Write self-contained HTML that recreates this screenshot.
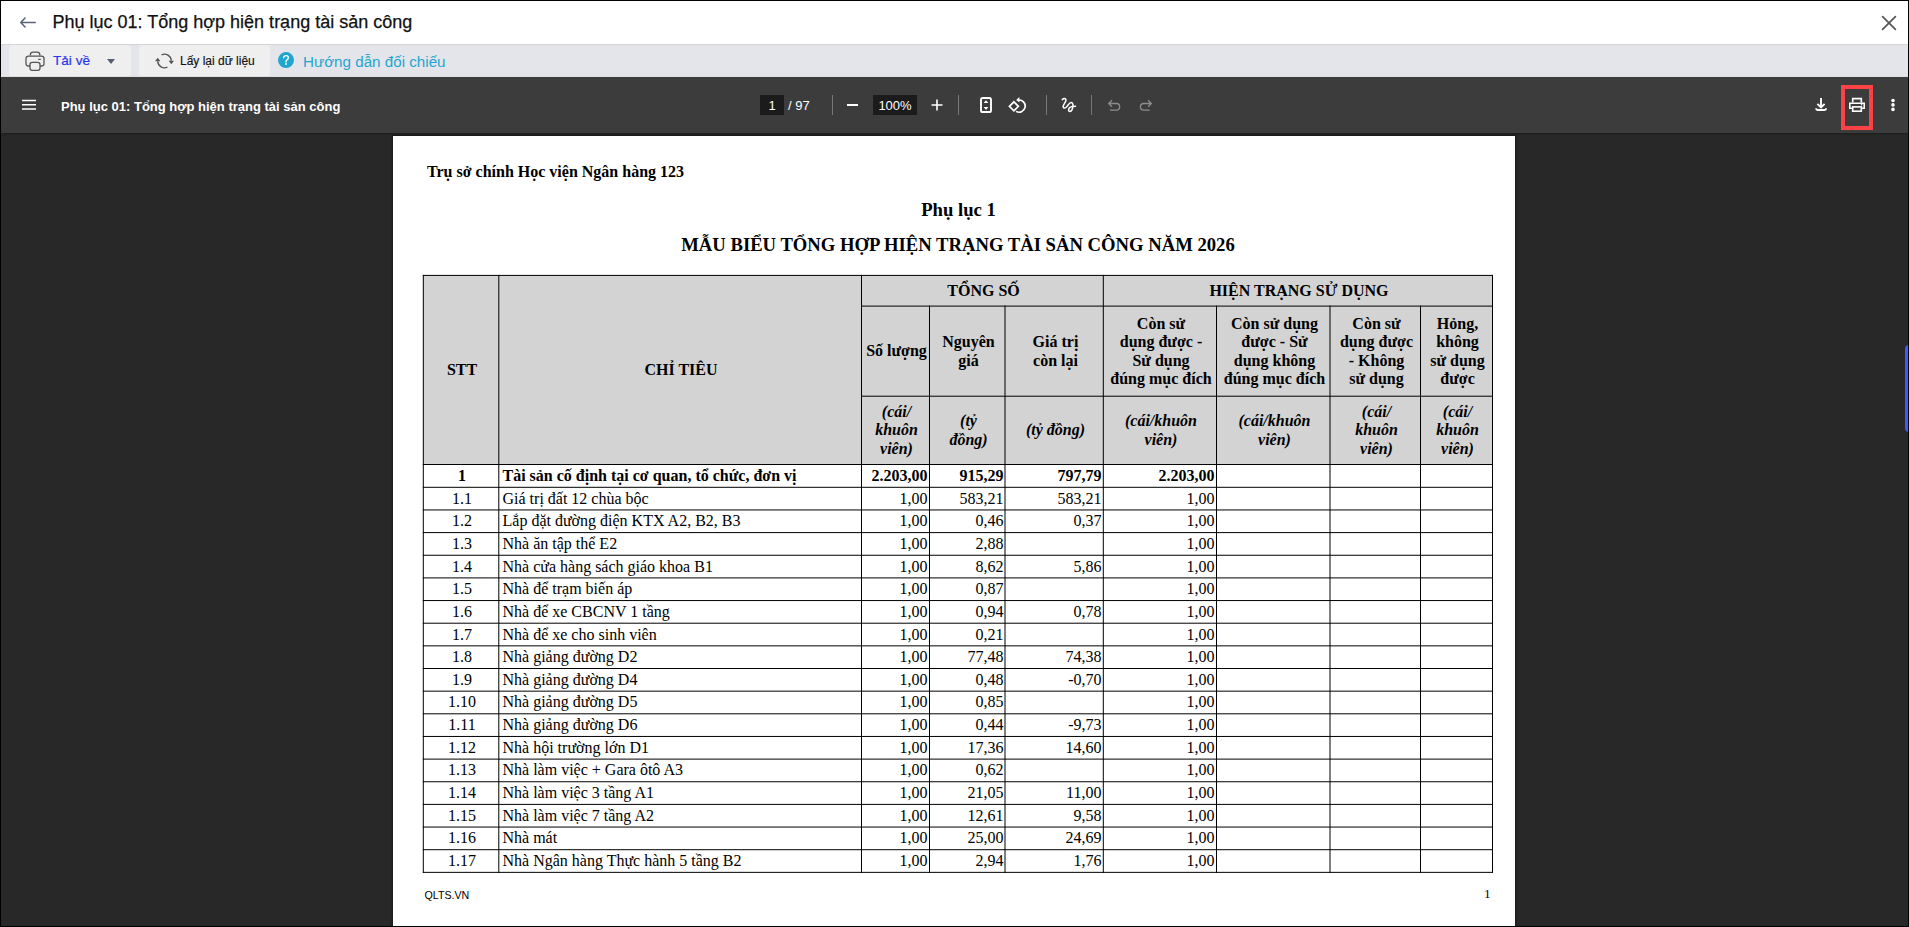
<!DOCTYPE html>
<html><head><meta charset="utf-8"><title>Phụ lục 01</title>
<style>
*{margin:0;padding:0;box-sizing:border-box}
html,body{width:1909px;height:927px;overflow:hidden;background:#000}
body{position:relative;font-family:"Liberation Sans",sans-serif}
.a{position:absolute}
.serif{font-family:"Liberation Serif",serif;color:#000}
.ln{position:absolute;background:#000}
.cell{position:absolute;display:flex;align-items:center;justify-content:center;text-align:center;font-family:"Liberation Serif",serif;font-size:16px;line-height:18.4px;color:#000;white-space:nowrap}
.hd{font-weight:bold}
.it{font-style:italic;font-weight:bold}
.r{justify-content:flex-end;text-align:right;padding-right:1.5px}
.l{justify-content:flex-start;text-align:left;padding-left:3.5px}
.c1{padding-left:2px}
</style></head><body>

<div class="a" style="left:0;top:0;width:1909px;height:927px;background:#282828"></div>
<div class="a" style="left:0;top:0;width:1909px;height:45px;background:#fff;border-bottom:1px solid #d4d4d4"></div>
<svg class="a" style="left:18px;top:15px" width="20" height="15" viewBox="0 0 20 15"><path d="M7 3 L2.8 7.5 L7 12 M2.8 7.5 H17.2" fill="none" stroke="#5b6578" stroke-width="1.6" stroke-linecap="round" stroke-linejoin="round"/></svg>
<div class="a" style="left:52.5px;top:11px;font-size:18px;line-height:22px;color:#111;-webkit-text-stroke:0.25px #111">Phụ lục 01: Tổng hợp hiện trạng tài sản công</div>
<svg class="a" style="left:1880px;top:14px" width="18" height="18" viewBox="0 0 18 18"><path d="M2.6 2.6 L15.4 15.4 M15.4 2.6 L2.6 15.4" stroke="#555" stroke-width="1.7" stroke-linecap="round"/></svg>
<div class="a" style="left:0;top:45px;width:1909px;height:32px;background:#e4e5ea"></div>
<div class="a" style="left:9px;top:45px;width:122px;height:31px;background:#efefef;border-radius:3px"></div>
<div class="a" style="left:139px;top:45px;width:131px;height:31px;background:#efefef;border-radius:3px"></div>
<svg class="a" style="left:24px;top:50px" width="22" height="22" viewBox="0 0 22 22"><g fill="none" stroke="#555" stroke-width="1.3"><path d="M6.4 5.6 V4.5 Q6.4 2.2 9 2.2 H13 Q15.8 2.2 15.8 4.5 V5.6"/><path d="M6 16 H4.3 Q2 16 2 13.5 V8.6 Q2 6.1 4.6 6.1 H17.4 Q20 6.1 20 8.6 V13.5 Q20 16 17.7 16 H16"/><rect x="6" y="12.4" width="10" height="7.9" rx="2.2"/></g><path d="M14.2 9.4 H16.8" stroke="#555" stroke-width="1.2"/></svg>
<div class="a" style="left:53px;top:53px;font-size:13.6px;line-height:16px;color:#2b35f0;-webkit-text-stroke:0.2px #2b35f0">Tải về</div>
<div class="a" style="left:107px;top:59px;width:0;height:0;border-left:4px solid transparent;border-right:4px solid transparent;border-top:5px solid #555e70"></div>
<svg class="a" style="left:153px;top:52px" width="22" height="18" viewBox="0 0 22 18"><g fill="none" stroke="#555" stroke-width="1.4" stroke-linecap="butt"><path d="M8.63 2.84 A6.8 6.8 0 0 1 18.27 8.6"/><path d="M14.37 15.16 A6.8 6.8 0 0 1 4.73 9.4"/></g><path d="M15.6 8.7 L21 8.7 L18.3 12.3 Z" fill="#555"/><path d="M2 9.3 L7.4 9.3 L4.7 5.7 Z" fill="#555"/></svg>
<div class="a" style="left:180px;top:54px;font-size:12px;line-height:15px;color:#111;-webkit-text-stroke:0.15px #111">Lấy lại dữ liệu</div>
<svg class="a" style="left:277px;top:51px" width="18" height="18" viewBox="0 0 18 18"><circle cx="9" cy="9.1" r="8" fill="#1fa6cf"/><path d="M6.6 6.8 Q6.6 4.6 9 4.6 Q11.4 4.6 11.4 6.8 Q11.4 8 10 8.9 Q9 9.6 9 11" fill="none" stroke="#fff" stroke-width="1.3" stroke-linecap="round"/><rect x="8.2" y="12.2" width="1.6" height="1.6" fill="#fff"/></svg>
<div class="a" style="left:303px;top:52px;font-size:15.2px;line-height:19px;color:#1fa6cf">Hướng dẫn đối chiếu</div>
<div class="a" style="left:0;top:77px;width:1909px;height:56px;background:#3c3c3c;box-shadow:0 1px 2px rgba(0,0,0,.3)"></div>
<svg class="a" style="left:22px;top:99px" width="16" height="12" viewBox="0 0 16 12"><path d="M0 1.5 H14 M0 5.7 H14 M0 9.9 H14" stroke="#fff" stroke-width="1.5"/></svg>
<div class="a" style="left:61px;top:98px;font-size:13px;line-height:18px;color:#fff;font-weight:bold">Phụ lục 01: Tổng hợp hiện trạng tài sản công</div>
<div class="a" style="left:760px;top:95px;width:24px;height:20px;background:#1b1b1b"></div>
<div class="a" style="left:760px;top:98px;width:24px;text-align:center;font-size:13px;line-height:16px;color:#fff">1</div>
<div class="a" style="left:788px;top:98px;font-size:13px;line-height:16px;color:#fff">/ 97</div>
<div class="a" style="left:832px;top:95px;width:1px;height:20px;background:#777"></div>
<div class="a" style="left:847px;top:104px;width:11px;height:1.6px;background:#fff"></div>
<div class="a" style="left:873px;top:95px;width:44px;height:20px;background:#1b1b1b"></div>
<div class="a" style="left:873px;top:98px;width:44px;text-align:center;font-size:13px;line-height:16px;color:#fff">100%</div>
<svg class="a" style="left:931px;top:99px" width="12" height="12" viewBox="0 0 12 12"><path d="M6 0.5 V11.5 M0.5 6 H11.5" stroke="#fff" stroke-width="1.6"/></svg>
<div class="a" style="left:958px;top:95px;width:1px;height:20px;background:#777"></div>
<svg class="a" style="left:979px;top:96px" width="14" height="18" viewBox="0 0 14 18"><rect x="2" y="2" width="10" height="14" rx="1.6" fill="none" stroke="#fff" stroke-width="1.9"/><path d="M4.6 7.1 L7 4.2 L9.4 7.1 Z M4.6 11 L7 14 L9.4 11 Z" fill="#fff"/></svg>
<svg class="a" style="left:1007px;top:95px" width="20" height="19" viewBox="0 0 20 19"><g fill="none" stroke="#fff" stroke-width="1.7" stroke-linejoin="miter"><path d="M2.4 11.3 L6.9 6.8 L11.4 11.3 L6.9 15.8 Z"/><path d="M11.57 5.02 A6.1 6.1 0 1 1 9.05 16.38"/></g><path d="M9.2 4.9 L12.4 2 L12.4 7.6 Z" fill="#fff"/></svg>
<div class="a" style="left:1046px;top:95px;width:1px;height:20px;background:#777"></div>
<svg class="a" style="left:1056px;top:94px" width="26" height="22" viewBox="0 0 26 22"><path d="M6.3 5.6 C7.5 4.5 9.5 4 10 5.8 C10.3 7.5 7.3 10.5 7.1 12.3 C7 14 8.5 14.6 10 13.5 C11.5 12.3 13 8.8 15 8.6 C17 8.5 17.2 11 16.8 13 C16.4 15.3 15 17.5 13.7 17.5 C12.3 17.5 12.3 15.5 13.3 14 C14.5 12.4 17.5 12.3 19.5 12.3" fill="none" stroke="#fff" stroke-width="1.5" stroke-linecap="round" stroke-linejoin="round"/></svg>
<div class="a" style="left:1091px;top:95px;width:1px;height:20px;background:#777"></div>
<svg class="a" style="left:1100px;top:92px" width="26" height="26" viewBox="1100 92 26 26"><path d="M1112 100.2 L1108.7 103.5 L1112 106.8 M1108.7 103.5 H1116.4 A3.3 3.3 0 0 1 1116.4 110.1 H1110" fill="none" stroke="#8c8c8c" stroke-width="1.3"/></svg>
<svg class="a" style="left:1134px;top:92px" width="26" height="26" viewBox="1134 92 26 26"><path d="M1148.1 100.2 L1151.4 103.5 L1148.1 106.8 M1151.4 103.5 H1143.7 A3.3 3.3 0 0 0 1143.7 110.1 H1149.7" fill="none" stroke="#8c8c8c" stroke-width="1.3"/></svg>
<svg class="a" style="left:1810px;top:92px" width="22" height="22" viewBox="1810 92 22 22"><g fill="none" stroke="#fff" stroke-width="1.9"><path d="M1821 98 V107.5"/><path d="M1817.4 103.8 L1821 107.4 L1824.6 103.8"/><path d="M1816.2 108.2 V108.8 Q1816.2 110 1817.6 110 H1824.6 Q1826 110 1826 108.8 V108.2"/></g></svg>
<div class="a" style="left:1841px;top:85px;width:32px;height:45px;border:4px solid #fc4245"></div>
<svg class="a" style="left:1845px;top:94px" width="24" height="22" viewBox="1845 94 24 22"><g fill="none" stroke="#fff" stroke-width="1.6"><path d="M1852.7 102.5 V98.6 H1861.3 V102.5"/><path d="M1852.4 108.3 H1849.8 V103.3 H1864.2 V108.3 H1861.6"/><rect x="1852.7" y="106.9" width="8.6" height="4.3"/></g><circle cx="1861.6" cy="104.8" r="0.8" fill="#fff"/></svg>
<svg class="a" style="left:1888px;top:96px" width="10" height="18" viewBox="1888 96 10 18"><circle cx="1893" cy="100.5" r="1.8" fill="#fff"/><circle cx="1893" cy="104.9" r="1.8" fill="#fff"/><circle cx="1893" cy="109.4" r="1.8" fill="#fff"/></svg>
<div class="a" style="left:1905px;top:345px;width:4px;height:87px;background:#3d5afe;border-radius:4px 0 0 4px"></div>
<div class="a" style="left:393px;top:136px;width:1122px;height:791px;background:#fff;box-shadow:0 0 2px 1px rgba(0,0,0,.4)"></div>
<div class="a serif" style="left:427px;top:161.7px;font-size:16px;line-height:20px;font-weight:bold">Trụ sở chính Học viện Ngân hàng 123</div>
<div class="a serif" style="left:424px;width:1069px;top:198.5px;text-align:center;font-size:18.67px;line-height:22px;font-weight:bold">Phụ lục 1</div>
<div class="a serif" style="left:423.5px;width:1069px;top:234.4px;text-align:center;font-size:18.67px;line-height:22px;font-weight:bold">MẪU BIỂU TỔNG HỢP HIỆN TRẠNG TÀI SẢN CÔNG NĂM 2026</div>
<div class="a" style="left:423px;top:275px;width:1069px;height:189px;background:#d3d3d3"></div>
<div class="cell hd c1" style="left:424px;top:276px;width:74px;height:188px">STT</div>
<div class="cell hd c1" style="left:499px;top:276px;width:362px;height:188px">CHỈ TIÊU</div>
<div class="cell hd c1" style="left:862px;top:276px;width:241px;height:30px">TỔNG SỐ</div>
<div class="cell hd c1" style="left:1104px;top:276px;width:388px;height:30px">HIỆN TRẠNG SỬ DỤNG</div>
<div class="cell hd c1" style="left:862px;top:307px;width:67px;height:89px">Số lượng</div>
<div class="cell it c1" style="left:862px;top:397px;width:67px;height:67px">(cái/<br>khuôn<br>viên)</div>
<div class="cell hd c1" style="left:930px;top:307px;width:75px;height:89px">Nguyên<br>giá</div>
<div class="cell it c1" style="left:930px;top:397px;width:75px;height:67px">(tỷ<br>đồng)</div>
<div class="cell hd c1" style="left:1006px;top:307px;width:97px;height:89px">Giá trị<br>còn lại</div>
<div class="cell it c1" style="left:1006px;top:397px;width:97px;height:67px">(tỷ đồng)</div>
<div class="cell hd c1" style="left:1104px;top:307px;width:112px;height:89px">Còn sử<br>dụng được -<br>Sử dụng<br>đúng mục đích</div>
<div class="cell it c1" style="left:1104px;top:397px;width:112px;height:67px">(cái/khuôn<br>viên)</div>
<div class="cell hd c1" style="left:1217px;top:307px;width:113px;height:89px">Còn sử dụng<br>được - Sử<br>dụng không<br>đúng mục đích</div>
<div class="cell it c1" style="left:1217px;top:397px;width:113px;height:67px">(cái/khuôn<br>viên)</div>
<div class="cell hd c1" style="left:1331px;top:307px;width:89px;height:89px">Còn sử<br>dụng được<br>- Không<br>sử dụng</div>
<div class="cell it c1" style="left:1331px;top:397px;width:89px;height:67px">(cái/<br>khuôn<br>viên)</div>
<div class="cell hd c1" style="left:1421px;top:307px;width:71px;height:89px">Hỏng,<br>không<br>sử dụng<br>được</div>
<div class="cell it c1" style="left:1421px;top:397px;width:71px;height:67px">(cái/<br>khuôn<br>viên)</div>
<div class="cell  hd c1" style="left:424px;top:465px;width:74px;height:22px">1</div>
<div class="cell l hd" style="left:499px;top:465px;width:362px;height:22px">Tài sản cố định tại cơ quan, tổ chức, đơn vị</div>
<div class="cell r hd" style="left:862px;top:465px;width:67px;height:22px">2.203,00</div>
<div class="cell r hd" style="left:930px;top:465px;width:75px;height:22px">915,29</div>
<div class="cell r hd" style="left:1006px;top:465px;width:97px;height:22px">797,79</div>
<div class="cell r hd" style="left:1104px;top:465px;width:112px;height:22px">2.203,00</div>
<div class="cell  c1" style="left:424px;top:488px;width:74px;height:22px">1.1</div>
<div class="cell l" style="left:499px;top:488px;width:362px;height:22px">Giá trị đất 12 chùa bộc</div>
<div class="cell r" style="left:862px;top:488px;width:67px;height:22px">1,00</div>
<div class="cell r" style="left:930px;top:488px;width:75px;height:22px">583,21</div>
<div class="cell r" style="left:1006px;top:488px;width:97px;height:22px">583,21</div>
<div class="cell r" style="left:1104px;top:488px;width:112px;height:22px">1,00</div>
<div class="cell  c1" style="left:424px;top:511px;width:74px;height:21px">1.2</div>
<div class="cell l" style="left:499px;top:511px;width:362px;height:21px">Lắp đặt đường điện KTX A2, B2, B3</div>
<div class="cell r" style="left:862px;top:511px;width:67px;height:21px">1,00</div>
<div class="cell r" style="left:930px;top:511px;width:75px;height:21px">0,46</div>
<div class="cell r" style="left:1006px;top:511px;width:97px;height:21px">0,37</div>
<div class="cell r" style="left:1104px;top:511px;width:112px;height:21px">1,00</div>
<div class="cell  c1" style="left:424px;top:533px;width:74px;height:22px">1.3</div>
<div class="cell l" style="left:499px;top:533px;width:362px;height:22px">Nhà ăn tập thể E2</div>
<div class="cell r" style="left:862px;top:533px;width:67px;height:22px">1,00</div>
<div class="cell r" style="left:930px;top:533px;width:75px;height:22px">2,88</div>
<div class="cell r" style="left:1104px;top:533px;width:112px;height:22px">1,00</div>
<div class="cell  c1" style="left:424px;top:556px;width:74px;height:22px">1.4</div>
<div class="cell l" style="left:499px;top:556px;width:362px;height:22px">Nhà cửa hàng sách giáo khoa B1</div>
<div class="cell r" style="left:862px;top:556px;width:67px;height:22px">1,00</div>
<div class="cell r" style="left:930px;top:556px;width:75px;height:22px">8,62</div>
<div class="cell r" style="left:1006px;top:556px;width:97px;height:22px">5,86</div>
<div class="cell r" style="left:1104px;top:556px;width:112px;height:22px">1,00</div>
<div class="cell  c1" style="left:424px;top:579px;width:74px;height:21px">1.5</div>
<div class="cell l" style="left:499px;top:579px;width:362px;height:21px">Nhà để trạm biến áp</div>
<div class="cell r" style="left:862px;top:579px;width:67px;height:21px">1,00</div>
<div class="cell r" style="left:930px;top:579px;width:75px;height:21px">0,87</div>
<div class="cell r" style="left:1104px;top:579px;width:112px;height:21px">1,00</div>
<div class="cell  c1" style="left:424px;top:601px;width:74px;height:22px">1.6</div>
<div class="cell l" style="left:499px;top:601px;width:362px;height:22px">Nhà để xe CBCNV 1 tầng</div>
<div class="cell r" style="left:862px;top:601px;width:67px;height:22px">1,00</div>
<div class="cell r" style="left:930px;top:601px;width:75px;height:22px">0,94</div>
<div class="cell r" style="left:1006px;top:601px;width:97px;height:22px">0,78</div>
<div class="cell r" style="left:1104px;top:601px;width:112px;height:22px">1,00</div>
<div class="cell  c1" style="left:424px;top:624px;width:74px;height:22px">1.7</div>
<div class="cell l" style="left:499px;top:624px;width:362px;height:22px">Nhà để xe cho sinh viên</div>
<div class="cell r" style="left:862px;top:624px;width:67px;height:22px">1,00</div>
<div class="cell r" style="left:930px;top:624px;width:75px;height:22px">0,21</div>
<div class="cell r" style="left:1104px;top:624px;width:112px;height:22px">1,00</div>
<div class="cell  c1" style="left:424px;top:647px;width:74px;height:21px">1.8</div>
<div class="cell l" style="left:499px;top:647px;width:362px;height:21px">Nhà giảng đường D2</div>
<div class="cell r" style="left:862px;top:647px;width:67px;height:21px">1,00</div>
<div class="cell r" style="left:930px;top:647px;width:75px;height:21px">77,48</div>
<div class="cell r" style="left:1006px;top:647px;width:97px;height:21px">74,38</div>
<div class="cell r" style="left:1104px;top:647px;width:112px;height:21px">1,00</div>
<div class="cell  c1" style="left:424px;top:669px;width:74px;height:22px">1.9</div>
<div class="cell l" style="left:499px;top:669px;width:362px;height:22px">Nhà giảng đường D4</div>
<div class="cell r" style="left:862px;top:669px;width:67px;height:22px">1,00</div>
<div class="cell r" style="left:930px;top:669px;width:75px;height:22px">0,48</div>
<div class="cell r" style="left:1006px;top:669px;width:97px;height:22px">-0,70</div>
<div class="cell r" style="left:1104px;top:669px;width:112px;height:22px">1,00</div>
<div class="cell  c1" style="left:424px;top:692px;width:74px;height:21px">1.10</div>
<div class="cell l" style="left:499px;top:692px;width:362px;height:21px">Nhà giảng đường D5</div>
<div class="cell r" style="left:862px;top:692px;width:67px;height:21px">1,00</div>
<div class="cell r" style="left:930px;top:692px;width:75px;height:21px">0,85</div>
<div class="cell r" style="left:1104px;top:692px;width:112px;height:21px">1,00</div>
<div class="cell  c1" style="left:424px;top:714px;width:74px;height:22px">1.11</div>
<div class="cell l" style="left:499px;top:714px;width:362px;height:22px">Nhà giảng đường D6</div>
<div class="cell r" style="left:862px;top:714px;width:67px;height:22px">1,00</div>
<div class="cell r" style="left:930px;top:714px;width:75px;height:22px">0,44</div>
<div class="cell r" style="left:1006px;top:714px;width:97px;height:22px">-9,73</div>
<div class="cell r" style="left:1104px;top:714px;width:112px;height:22px">1,00</div>
<div class="cell  c1" style="left:424px;top:737px;width:74px;height:22px">1.12</div>
<div class="cell l" style="left:499px;top:737px;width:362px;height:22px">Nhà hội trường lớn D1</div>
<div class="cell r" style="left:862px;top:737px;width:67px;height:22px">1,00</div>
<div class="cell r" style="left:930px;top:737px;width:75px;height:22px">17,36</div>
<div class="cell r" style="left:1006px;top:737px;width:97px;height:22px">14,60</div>
<div class="cell r" style="left:1104px;top:737px;width:112px;height:22px">1,00</div>
<div class="cell  c1" style="left:424px;top:760px;width:74px;height:21px">1.13</div>
<div class="cell l" style="left:499px;top:760px;width:362px;height:21px">Nhà làm việc + Gara ôtô A3</div>
<div class="cell r" style="left:862px;top:760px;width:67px;height:21px">1,00</div>
<div class="cell r" style="left:930px;top:760px;width:75px;height:21px">0,62</div>
<div class="cell r" style="left:1104px;top:760px;width:112px;height:21px">1,00</div>
<div class="cell  c1" style="left:424px;top:782px;width:74px;height:22px">1.14</div>
<div class="cell l" style="left:499px;top:782px;width:362px;height:22px">Nhà làm việc 3 tầng A1</div>
<div class="cell r" style="left:862px;top:782px;width:67px;height:22px">1,00</div>
<div class="cell r" style="left:930px;top:782px;width:75px;height:22px">21,05</div>
<div class="cell r" style="left:1006px;top:782px;width:97px;height:22px">11,00</div>
<div class="cell r" style="left:1104px;top:782px;width:112px;height:22px">1,00</div>
<div class="cell  c1" style="left:424px;top:805px;width:74px;height:22px">1.15</div>
<div class="cell l" style="left:499px;top:805px;width:362px;height:22px">Nhà làm việc 7 tầng A2</div>
<div class="cell r" style="left:862px;top:805px;width:67px;height:22px">1,00</div>
<div class="cell r" style="left:930px;top:805px;width:75px;height:22px">12,61</div>
<div class="cell r" style="left:1006px;top:805px;width:97px;height:22px">9,58</div>
<div class="cell r" style="left:1104px;top:805px;width:112px;height:22px">1,00</div>
<div class="cell  c1" style="left:424px;top:828px;width:74px;height:21px">1.16</div>
<div class="cell l" style="left:499px;top:828px;width:362px;height:21px">Nhà mát</div>
<div class="cell r" style="left:862px;top:828px;width:67px;height:21px">1,00</div>
<div class="cell r" style="left:930px;top:828px;width:75px;height:21px">25,00</div>
<div class="cell r" style="left:1006px;top:828px;width:97px;height:21px">24,69</div>
<div class="cell r" style="left:1104px;top:828px;width:112px;height:21px">1,00</div>
<div class="cell  c1" style="left:424px;top:850px;width:74px;height:22px">1.17</div>
<div class="cell l" style="left:499px;top:850px;width:362px;height:22px">Nhà Ngân hàng Thực hành 5 tầng B2</div>
<div class="cell r" style="left:862px;top:850px;width:67px;height:22px">1,00</div>
<div class="cell r" style="left:930px;top:850px;width:75px;height:22px">2,94</div>
<div class="cell r" style="left:1006px;top:850px;width:97px;height:22px">1,76</div>
<div class="cell r" style="left:1104px;top:850px;width:112px;height:22px">1,00</div>
<svg class="a" style="left:0;top:0" width="1909" height="927" viewBox="0 0 1909 927"><g fill="#000"><rect x="422.8" y="274.9" width="1070.20" height="1"/><rect x="861.0" y="305.6" width="632.00" height="1"/><rect x="861.0" y="395.7" width="632.00" height="1"/><rect x="422.8" y="464.0" width="1070.20" height="1"/><rect x="422.8" y="486.80" width="1070.20" height="1"/><rect x="422.8" y="509.45" width="1070.20" height="1"/><rect x="422.8" y="532.10" width="1070.20" height="1"/><rect x="422.8" y="554.75" width="1070.20" height="1"/><rect x="422.8" y="577.40" width="1070.20" height="1"/><rect x="422.8" y="600.05" width="1070.20" height="1"/><rect x="422.8" y="622.70" width="1070.20" height="1"/><rect x="422.8" y="645.35" width="1070.20" height="1"/><rect x="422.8" y="668.00" width="1070.20" height="1"/><rect x="422.8" y="690.65" width="1070.20" height="1"/><rect x="422.8" y="713.30" width="1070.20" height="1"/><rect x="422.8" y="735.95" width="1070.20" height="1"/><rect x="422.8" y="758.60" width="1070.20" height="1"/><rect x="422.8" y="781.25" width="1070.20" height="1"/><rect x="422.8" y="803.90" width="1070.20" height="1"/><rect x="422.8" y="826.55" width="1070.20" height="1"/><rect x="422.8" y="849.20" width="1070.20" height="1"/><rect x="422.8" y="871.85" width="1070.20" height="1"/><rect x="422.8" y="274.9" width="1" height="597.95"/><rect x="498.3" y="274.9" width="1" height="597.95"/><rect x="861.0" y="274.9" width="1" height="597.95"/><rect x="929.0" y="305.6" width="1" height="567.25"/><rect x="1004.5" y="305.6" width="1" height="567.25"/><rect x="1102.8" y="274.9" width="1" height="597.95"/><rect x="1216.0" y="305.6" width="1" height="567.25"/><rect x="1329.5" y="305.6" width="1" height="567.25"/><rect x="1420.0" y="305.6" width="1" height="567.25"/><rect x="1492.0" y="274.9" width="1" height="597.95"/></g></svg>
<div class="a" style="left:424.5px;top:889.3px;font-size:10.67px;line-height:13px;color:#000">QLTS.VN</div>
<div class="a serif" style="left:1484px;top:886px;font-size:13.33px;line-height:16px">1</div>
<div class="a" style="left:0;top:0;width:1909px;height:927px;border:1px solid #000"></div>
</body></html>
